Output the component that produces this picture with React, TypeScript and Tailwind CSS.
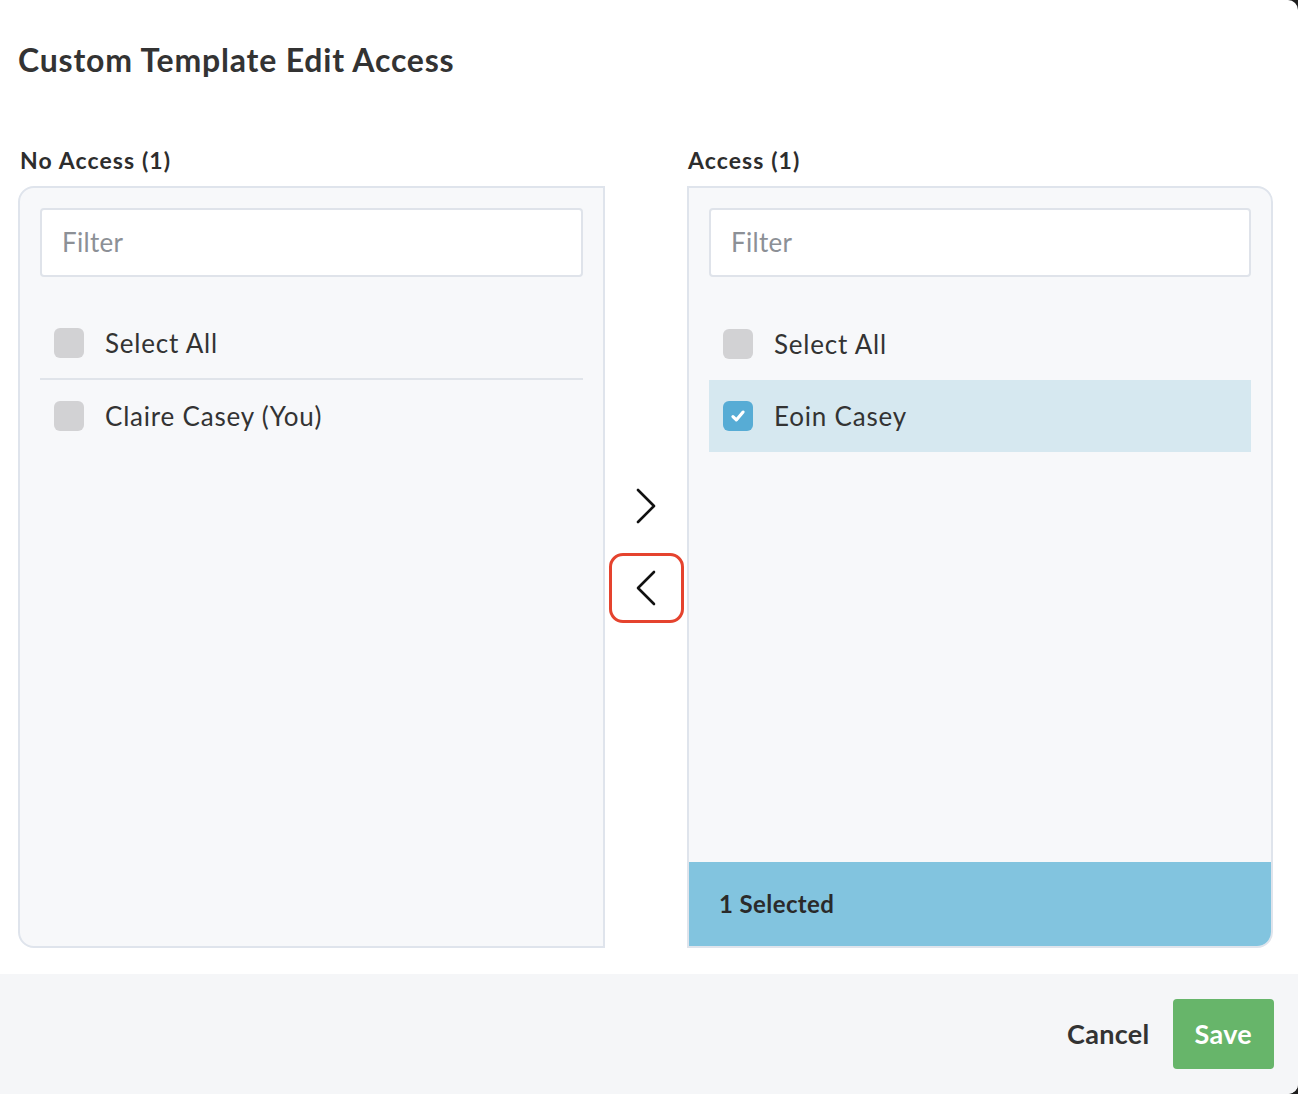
import React from "react";

type Person = { name: string; checked?: boolean };

function Checkbox({ checked }: { checked?: boolean }) {
  if (checked) {
    return (
      <span className="flex h-[30px] w-[30px] shrink-0 items-center justify-center rounded-[6px] bg-[#57acd5]">
        <svg width="18" height="18" viewBox="0 0 16 16" fill="none">
          <path d="M3.5 8.5 L6.5 11.5 L12.5 4.5" stroke="#ffffff" strokeWidth="2.8" strokeLinecap="round" strokeLinejoin="round" />
        </svg>
      </span>
    );
  }
  return <span className="h-[30px] w-[30px] shrink-0 rounded-[6px] bg-[#d2d2d4]" />;
}

function Row({ label, checked, divider }: { label: string; checked?: boolean; divider?: boolean }) {
  return (
    <div
      className={
        "flex h-[72px] items-center gap-[21px] pl-[14px] text-[26px] tracking-[0.8px] text-[#333333] " +
        (checked ? "bg-[#d6e8f0] " : "") +
        (divider ? "border-b-2 border-[#e0e4ea]" : "")
      }
    >
      <Checkbox checked={checked} />
      <span>{label}</span>
    </div>
  );
}

function ListPanel({ people, side, selected }: { people: Person[]; side: "left" | "right"; selected?: number }) {
  return (
    <div
      className={
        "flex h-[762px] flex-col overflow-hidden border-2 border-[#dfe4ec] bg-[#f7f8fa] " +
        (side === "left" ? "rounded-l-[16px]" : "rounded-r-[16px]")
      }
    >
      <div className="flex-1 p-[20px]">
        <div className="flex h-[69px] items-center rounded-[4px] border-2 border-[#dfe3ea] bg-white px-[20px] text-[26px] tracking-[0.3px] text-[#8c9096]">
          Filter
        </div>
        <div className="mt-[31px]">
          <Row label="Select All" divider={side === "left"} />
          {people.map((p) => (
            <Row key={p.name} label={p.name} checked={p.checked} />
          ))}
        </div>
      </div>
      {selected ? (
        <div className="flex h-[84px] items-center bg-[#82c4df] pl-[30px] text-[24px] font-bold tracking-[0.4px] text-[#2a2a2a]">
          {selected} Selected
        </div>
      ) : null}
    </div>
  );
}

function Chevron({ dir }: { dir: "left" | "right" }) {
  return (
    <svg width="22" height="36" viewBox="0 0 22 36" fill="none">
      {dir === "right" ? (
        <path d="M3 2 L19 18 L3 34" stroke="#111111" strokeWidth="2.6" strokeLinecap="round" strokeLinejoin="round" />
      ) : (
        <path d="M19 2 L3 18 L19 34" stroke="#111111" strokeWidth="2.6" strokeLinecap="round" strokeLinejoin="round" />
      )}
    </svg>
  );
}

export default function App() {
  return (
    <div
      className="h-[1094px] w-[1298px] bg-[#1e1e1e]"
      style={{ fontFamily: "Lato, 'Noto Sans', sans-serif" }}
    >
      <div className="flex h-full flex-col overflow-hidden rounded-r-[10px] bg-white">
        <div className="flex-1 pl-[18px] pr-[25px]">
          <h1 className="pt-[42px] text-[32px] font-bold leading-[36px] tracking-[0.8px] text-[#333333]">
            Custom Template Edit Access
          </h1>
          <div className="mt-[68px] grid grid-cols-[587px_82px_586px]">
            <div className="pl-[2px] text-[23px] font-bold leading-[28px] tracking-[1.1px] text-[#2d2d2d]">No Access (1)</div>
            <div />
            <div className="pl-[1px] text-[23px] font-bold leading-[28px] tracking-[1.1px] text-[#2d2d2d]">Access (1)</div>
            <div className="mt-[12px]">
              <ListPanel side="left" people={[{ name: "Claire Casey (You)" }]} />
            </div>
            <div className="mt-[12px] flex flex-col items-center justify-center gap-[12px] pb-[40px]">
              <button className="flex h-[70px] w-[75px] items-center justify-center">
                <Chevron dir="right" />
              </button>
              <button className="flex h-[70px] w-[75px] items-center justify-center rounded-[14px] border-[3px] border-[#e5432e]">
                <Chevron dir="left" />
              </button>
            </div>
            <div className="mt-[12px]">
              <ListPanel side="right" people={[{ name: "Eoin Casey", checked: true }]} selected={1} />
            </div>
          </div>
        </div>
        <div className="flex h-[120px] items-center justify-end gap-[23px] bg-[#f5f6f8] pr-[24px]">
          <button className="text-[27px] font-bold tracking-[0.3px] text-[#333333]">Cancel</button>
          <button className="h-[70px] rounded-[4px] bg-[#67b56a] px-[22px] text-[27px] font-bold tracking-[0.3px] text-white">
            Save
          </button>
        </div>
      </div>
    </div>
  );
}
